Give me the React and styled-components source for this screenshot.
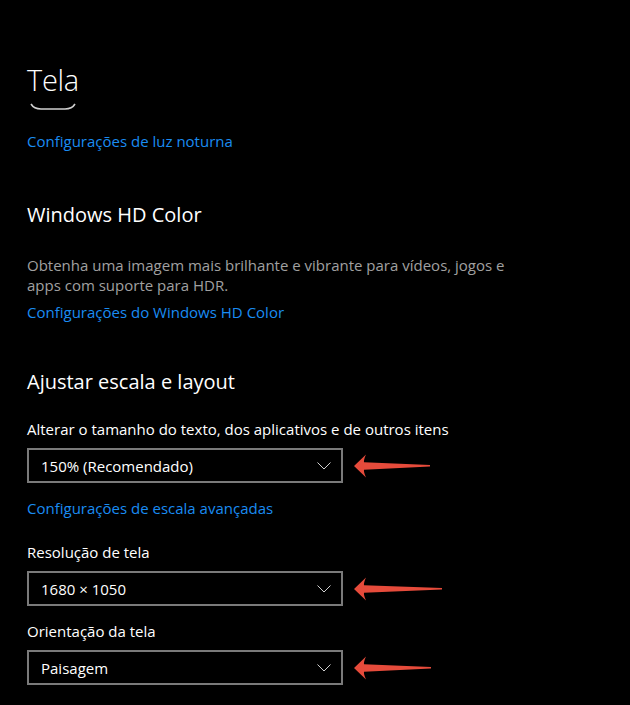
import React from 'react'
import styled, { createGlobalStyle } from 'styled-components'

const Global = createGlobalStyle`
  html, body {
    margin: 0;
    padding: 0;
    background: #000;
  }
  body {
    font-family: "Open Sans", "Noto Sans", sans-serif;
    color: #fff;
  }
`

const Page = styled.div`
  width: 630px;
  height: 705px;
  overflow: hidden;
  padding: 60px 0 0 27px;
  box-sizing: border-box;
  display: flex;
  flex-direction: column;
  align-items: flex-start;
`

const Title = styled.h1`
  margin: 0;
  font-size: 29px;
  font-weight: 300;
  line-height: 40px;
  letter-spacing: -0.3px;
`

const Curve = styled.svg`
  display: block;
  margin: 3px 0 0 3px;
`

const Link = styled.a`
  display: block;
  color: #1a8cf2;
  font-size: 15px;
  line-height: 20px;
  text-decoration: none;
  margin-top: ${p => p.$top || 0}px;
  cursor: pointer;
`

const Heading = styled.h2`
  margin: ${p => p.$top || 0}px 0 0;
  font-size: 20px;
  font-weight: 400;
  line-height: 28px;
`

const Text = styled.p`
  margin: 26px 0 0;
  width: 515px;
  font-size: 15px;
  line-height: 20px;
  color: #a0a0a0;
`

const Label = styled.div`
  margin-top: ${p => p.$top || 0}px;
  font-size: 15px;
  line-height: 20px;
  color: #fff;
`

const Row = styled.div`
  margin-top: ${p => p.$top || 0}px;
  display: flex;
  align-items: center;
  gap: 11px;
`

const Select = styled.div`
  width: 316px;
  height: 35px;
  box-sizing: border-box;
  border: 2px solid #7a7a7a;
  display: flex;
  align-items: center;
  justify-content: space-between;
  padding: 0 10px 0 12px;
  font-size: 15px;
  color: #fff;
`

const Chevron = () => (
  <svg width="14" height="8" viewBox="0 0 14 8">
    <path d="M0.5 0.5 L7 7 L13.5 0.5" fill="none" stroke="#d0d0d0" strokeWidth="1" />
  </svg>
)

const Arrow = ({ length = 76 }) => (
  <svg width={length} height="24" viewBox={`0 0 ${length} 24`}>
    <path
      d={`M0 12 L12 0.5 Q9.5 6 10 8.2 L${length} 11 L${length} 12.4 L10 15.8 Q9.5 18 12 23.5 Z`}
      fill="#e64b3b"
    />
  </svg>
)

const Dropdown = ({ value, top, arrow }) => (
  <Row $top={top}>
    <Select>
      <span>{value}</span>
      <Chevron />
    </Select>
    <Arrow length={arrow} />
  </Row>
)

export default function App() {
  return (
    <>
      <Global />
      <Page>
        <Title>Tela</Title>
        <Curve width="46" height="8" viewBox="0 0 46 8">
          <path d="M1 1 Q4 6 11 6 L35 6 Q42 6 45 1" fill="none" stroke="#cfcfcf" strokeWidth="1.6" />
        </Curve>
        <Link $top={20}>Configurações de luz noturna</Link>

        <Heading $top={50}>Windows HD Color</Heading>
        <Text>Obtenha uma imagem mais brilhante e vibrante para vídeos, jogos e apps com suporte para HDR.</Text>
        <Link $top={7}>Configurações do Windows HD Color</Link>

        <Heading $top={46}>Ajustar escala e layout</Heading>
        <Label $top={23}>Alterar o tamanho do texto, dos aplicativos e de outros itens</Label>
        <Dropdown value="150% (Recomendado)" top={9} arrow={76} />
        <Link $top={15}>Configurações de escala avançadas</Link>

        <Label $top={24}>Resolução de tela</Label>
        <Dropdown value="1680 × 1050" top={9} arrow={88} />

        <Label $top={15}>Orientação da tela</Label>
        <Dropdown value="Paisagem" top={9} arrow={77} />
      </Page>
    </>
  )
}
